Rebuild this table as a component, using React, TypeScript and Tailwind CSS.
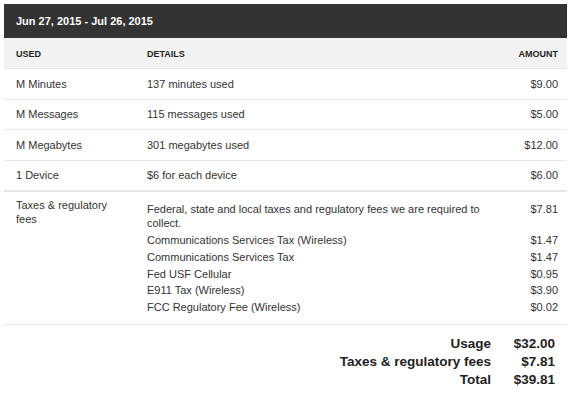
import React from 'react';

const usage = [
  { used: 'M Minutes', details: '137 minutes used', amount: '$9.00' },
  { used: 'M Messages', details: '115 messages used', amount: '$5.00' },
  { used: 'M Megabytes', details: '301 megabytes used', amount: '$12.00' },
  { used: '1 Device', details: '$6 for each device', amount: '$6.00' },
];

const taxes = [
  { label: 'Communications Services Tax (Wireless)', amount: '$1.47' },
  { label: 'Communications Services Tax', amount: '$1.47' },
  { label: 'Fed USF Cellular', amount: '$0.95' },
  { label: 'E911 Tax (Wireless)', amount: '$3.90' },
  { label: 'FCC Regulatory Fee (Wireless)', amount: '$0.02' },
];

const totals = [
  { label: 'Usage', amount: '$32.00' },
  { label: 'Taxes & regulatory fees', amount: '$7.81' },
  { label: 'Total', amount: '$39.81' },
];

export default function App() {
  return (
    <div className="w-[571px] h-[394px] bg-white p-[4px] text-[#333] font-['Liberation_Sans',Arial,sans-serif]">
      {/* Period header */}
      <div className="h-[34px] bg-[#333333] flex items-center pl-[12px] text-white text-[11px] font-bold">
        Jun 27, 2015 - Jul 26, 2015
      </div>

      {/* Column headings */}
      <div className="h-[30px] bg-[#f2f2f2] flex items-center pt-[3px] text-[9px] font-bold uppercase text-[#222]">
        <div className="w-[143px] pl-[12px]">Used</div>
        <div className="flex-1">Details</div>
        <div className="w-[80px] pr-[9px] text-right">Amount</div>
      </div>

      {/* Usage rows */}
      {usage.map((row) => (
        <div key={row.used} className="h-[30.5px] border-t border-[#e6e6e6] flex items-center text-[11px]">
          <div className="w-[143px] pl-[12px]">{row.used}</div>
          <div className="flex-1">{row.details}</div>
          <div className="w-[80px] pr-[9px] text-right">{row.amount}</div>
        </div>
      ))}

      {/* Taxes */}
      <div className="border-t-2 border-[#e6e6e6] border-b flex pt-[6px] pb-[8px] text-[11px]">
        <div className="w-[143px] pl-[12px] pr-[20px] leading-[14px]">Taxes &amp; regulatory fees</div>
        <div className="flex-1 pr-[9px] pt-[4px]">
          <div className="flex leading-[14px]">
            <div className="flex-1 pr-[40px]">
              Federal, state and local taxes and regulatory fees we are required to collect.
            </div>
            <div className="text-right">$7.81</div>
          </div>
          <div className="mt-[2px]">
            {taxes.map((t, i) => (
              <div key={i} className="flex leading-[16.75px]">
                <div className="flex-1">{t.label}</div>
                <div className="text-right">{t.amount}</div>
              </div>
            ))}
          </div>
        </div>
      </div>

      {/* Totals */}
      <div className="pt-[10px] flex flex-col items-end pr-[12px] text-[13.5px] font-bold leading-[18px] text-[#222]">
        {totals.map((t) => (
          <div key={t.label} className="flex">
            <div className="text-right">{t.label}</div>
            <div className="w-[64px] text-right">{t.amount}</div>
          </div>
        ))}
      </div>
    </div>
  );
}
